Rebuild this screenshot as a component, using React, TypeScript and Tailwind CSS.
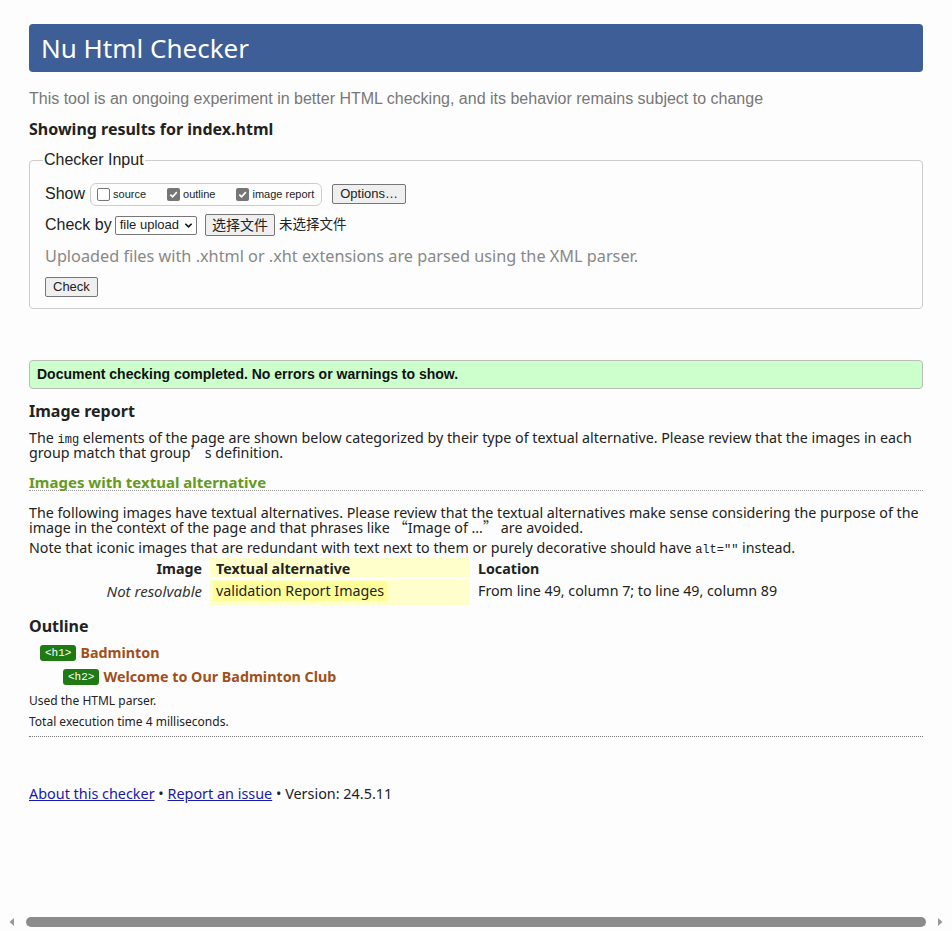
import React from 'react';

const seg = { fontFamily: '"Noto Sans", "Open Sans", sans-serif' };
const arial = { fontFamily: '"Liberation Sans", Arial, "Noto Sans CJK SC", sans-serif' };
const mono = { fontFamily: '"Liberation Mono", "DejaVu Sans Mono", monospace' };
const cjk = { fontFamily: '"Noto Sans CJK SC", sans-serif' };

const Check: React.FC<{ on?: boolean }> = ({ on }) => (
  <span
    className={`inline-flex items-center justify-center w-[13px] h-[13px] rounded-[2px] mr-[3px] ${
      on ? 'bg-[#767676]' : 'border border-[#767676] bg-white'
    }`}
  >
    {on && (
      <svg viewBox="0 0 12 12" className="w-[11px] h-[11px]">
        <path d="M2.5 6.2 L5 8.6 L9.6 3.4" fill="none" stroke="white" strokeWidth="1.8" />
      </svg>
    )}
  </span>
);

const Badge: React.FC<{ children: React.ReactNode }> = ({ children }) => (
  <span
    className="bg-[#1f7a14] text-white text-[11px] rounded-[3px] h-[16px] px-[5px] flex items-center mr-[4px]"
    style={mono}
  >
    {children}
  </span>
);

export default function App() {
  return (
    <div className="h-[931px] w-[952px] bg-[#fdfdfd] flex flex-col overflow-hidden text-[#222]">
      <div className="flex-1 px-[29px] pt-[24px]">
        {/* Header */}
        <div className="h-[48px] bg-[#3d5e96] rounded-[4px] flex items-center px-[12px]">
          <h1 className="text-white text-[26px] leading-none -mt-[1px]" style={seg}>Nu Html Checker</h1>
        </div>

        <p className="mt-[18px] text-[16px] text-[#777] leading-[18px]" style={arial}>
          This tool is an ongoing experiment in better HTML checking, and its behavior remains subject to change
        </p>
        <h2 className="mt-[11px] text-[16px] font-bold leading-[20px]" style={seg}>Showing results for index.html</h2>

        {/* Checker input */}
        <fieldset className="mt-[12px] border border-[#cccccc] rounded-[4px] px-[15px] pb-[10px] pt-[11px]" style={arial}>
          <legend className="px-[1px] -ml-[2px] text-[16px] text-[#222] leading-[18px]">Checker Input</legend>
          <div className="flex items-center h-[24px] mt-[2px]">
            <span className="text-[16px] mr-[5px]">Show</span>
            <span className="flex items-center h-[23px] border border-[#ccc] rounded-[6px] pl-[6px] pr-[7px] text-[11px]">
              <Check />
              <span className="mr-[21px]">source</span>
              <Check on />
              <span className="mr-[21px]">outline</span>
              <Check on />
              <span>image report</span>
            </span>
            <span className="ml-[10px] h-[20px] px-[7px] flex items-center text-[13px] bg-[#efefef] border border-[#767676] rounded-[2px]">
              Options…
            </span>
          </div>
          <div className="flex items-center h-[24px] mt-[7px]">
            <span className="text-[16px] mr-[3px]">Check by</span>
            <span className="h-[19px] flex items-center border border-[#767676] rounded-[2px] pl-[4px] pr-[3px] text-[13px] bg-white">
              file upload
              <svg viewBox="0 0 10 10" className="w-[9px] h-[9px] ml-[5px]">
                <path d="M1.5 3 L5 6.5 L8.5 3" fill="none" stroke="#111" strokeWidth="1.8" />
              </svg>
            </span>
            <span className="ml-[8px] h-[22px] px-[6px] flex items-center text-[14px] bg-[#efefef] border border-[#767676] rounded-[2px]">
              选择文件
            </span>
            <span className="ml-[4px] text-[13.5px]">未选择文件</span>
          </div>
          <p className="mt-[9px] text-[16.25px] text-[#888] leading-[20px]" style={seg}>
            Uploaded files with .xhtml or .xht extensions are parsed using the XML parser.
          </p>
          <span className="mt-[11px] inline-flex h-[20px] px-[7px] items-center text-[13px] bg-[#efefef] border border-[#767676] rounded-[2px]">
            Check
          </span>
        </fieldset>

        {/* Success */}
        <div
          className="mt-[51px] h-[29px] flex items-center px-[7px] bg-[#ccffcc] border border-[#bbbbbb] rounded-[4px] text-[14px] font-bold text-[#111]"
          style={arial}
        >
          Document checking completed. No errors or warnings to show.
        </div>

        <div style={seg} className="text-[14.25px]">
          <h2 className="mt-[11px] text-[16px] font-bold leading-[22px]">Image report</h2>
          <p className="mt-[9px] leading-[14px]">
            The <code className="text-[12px] leading-[0]" style={mono}>img</code> elements of the page are shown below categorized by their type of textual alternative. Please review that the images in each group match that group<span style={cjk}>’</span>s definition.
          </p>
          <h3 className="mt-[14px] text-[15px] font-bold text-[#669a1d] leading-[16px] border-b border-dotted border-[#999]">
            Images with textual alternative
          </h3>
          <p className="mt-[15px] leading-[14px]">
            The following images have textual alternatives. Please review that the textual alternatives make sense considering the purpose of the image in the context of the page and that phrases like <span style={cjk}>“</span>Image of …<span style={cjk}>”</span> are avoided.
          </p>
          <p className="mt-[5px] leading-[16px]">
            Note that iconic images that are redundant with text next to them or purely decorative should have{' '}
            <code className="text-[12px] leading-[0]" style={mono}>alt=""</code> instead.
          </p>

          {/* Table */}
          <div className="grid grid-cols-[181px_260px_1fr] mt-[2px]">
            <div className="text-right pr-[8px] font-bold h-[19px]">Image</div>
            <div className="bg-[#ffffcc] font-bold px-[6px] h-[19px]">Textual alternative</div>
            <div className="font-bold px-[8px]">Location</div>
            <div className="text-right pr-[8px] italic text-[15px] text-[#333]">Not resolvable</div>
            <div className="bg-[#ffffcc] px-[3px] pb-[4px]">
              <span className="inline-block bg-[#ffff99] px-[3px] pb-[1px] leading-[19px]">validation Report Images</span>
            </div>
            <div className="px-[8px]">From line 49, column 7; to line 49, column 89</div>
          </div>

          <h2 className="mt-[10px] text-[16px] font-bold leading-[22px]">Outline</h2>
          <div className="mt-[4px] pl-[11px] flex items-center h-[24px]">
            <Badge>&lt;h1&gt;</Badge>
            <span className="text-[#a0501a] font-bold text-[14.3px]">Badminton</span>
          </div>
          <div className="pl-[34px] flex items-center h-[24px]">
            <Badge>&lt;h2&gt;</Badge>
            <span className="text-[#a0501a] font-bold text-[14.3px]">Welcome to Our Badminton Club</span>
          </div>
          <p className="mt-[3px] text-[12px] leading-[17px]">Used the HTML parser.</p>
          <p className="mt-[4px] text-[12px] leading-[17px] pb-[6px] border-b border-dotted border-[#777]">
            Total execution time 4 milliseconds.
          </p>

          <p className="mt-[46px] text-[14.4px]">
            <a className="text-[#1a1aa6] underline">About this checker</a> •{' '}
            <a className="text-[#1a1aa6] underline">Report an issue</a> • Version: 24.5.11
          </p>
        </div>
      </div>

      {/* horizontal scrollbar */}
      <div className="h-[14px] mb-[2px] flex items-center px-[8px] gap-[4px]">
        <svg viewBox="0 0 8 8" className="w-[8px] h-[8px]">
          <path d="M6 0 L1.5 4 L6 8 Z" fill="#999" />
        </svg>
        <div className="flex-1 h-[10px] rounded-full bg-[#8b8b8b] mx-[6px]" />
        <svg viewBox="0 0 8 8" className="w-[8px] h-[8px]">
          <path d="M2 0 L6.5 4 L2 8 Z" fill="#999" />
        </svg>
      </div>
    </div>
  );
}
